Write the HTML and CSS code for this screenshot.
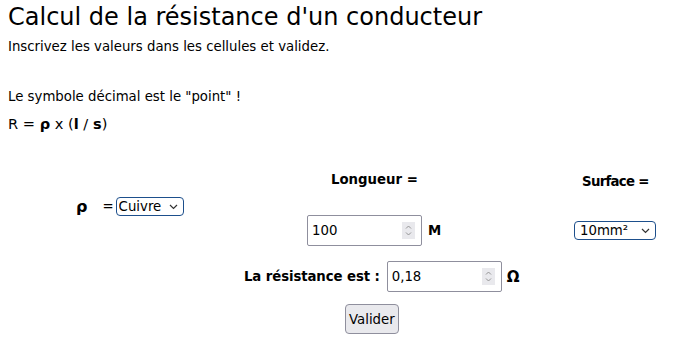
FILE: index.html
```html
<!DOCTYPE html>
<html lang="fr">
<head>
<meta charset="utf-8">
<title>Calcul de la résistance d'un conducteur</title>
<link rel="stylesheet" href="styles.css">
</head>
<body>
<h1 class="title">Calcul de la résistance d'un conducteur</h1>
<p class="intro">Inscrivez les valeurs dans les cellules et validez.</p>
<p class="note">Le symbole décimal est le "point" !</p>
<p class="formula">R = <b>ρ</b> x (<b>l</b> / <b>s</b>)</p>

<div class="calc">
  <div class="cell rho">
    <b class="rho-sym">ρ</b>
    <span class="eq">=</span>
    <span class="sel sel-mat">
      <select class="select"><option>Cuivre</option></select>
      <svg class="chev" width="9" height="6" viewBox="0 0 9 6"><path d="M1 1l3.5 3.5L8 1" fill="none" stroke="#333" stroke-width="1.2"/></svg>
    </span>
  </div>
  <div class="cell lab-long"><b>Longueur =</b></div>
  <div class="cell lab-surf"><b>Surface =</b></div>
  <div class="cell in-long">
    <span class="num num-long">
      <input class="num-input" type="text" value="100">
      <svg class="spin" width="13" height="17" viewBox="0 0 13 17"><rect width="13" height="17" fill="#e9e9ed"/><path d="M4 6.5L6.5 4L9 6.5M4 10.5L6.5 13L9 10.5" fill="none" stroke="#8a8a8a" stroke-width="0.9"/></svg>
    </span>
    <b class="unit">M</b>
  </div>
  <div class="cell in-surf">
    <span class="sel sel-surf">
      <select class="select"><option>10mm²</option></select>
      <svg class="chev" width="9" height="6" viewBox="0 0 9 6"><path d="M1 1l3.5 3.5L8 1" fill="none" stroke="#333" stroke-width="1.2"/></svg>
    </span>
  </div>
</div>

<div class="result">
  <b class="res-label">La résistance est :</b>
  <span class="num num-res">
    <input class="num-input" type="text" value="0,18">
    <svg class="spin" width="13" height="17" viewBox="0 0 13 17"><rect width="13" height="17" fill="#e9e9ed"/><path d="M4 6.5L6.5 4L9 6.5M4 10.5L6.5 13L9 10.5" fill="none" stroke="#8a8a8a" stroke-width="0.9"/></svg>
  </span>
  <b class="unit ohm">Ω</b>
</div>

<div class="actions">
  <button class="btn" type="button">Valider</button>
</div>
</body>
</html>
```
FILE: styles.css
```css
html, body {
  margin: 0;
  padding: 0;
  background: #fff;
}
body {
  padding: 0 8px;
  font-family: "DejaVu Sans", Verdana, sans-serif;
  font-size: 13.3px;
  color: #000;
}
.title {
  font-size: 24px;
  font-weight: normal;
  margin: 3px 0 0;
  line-height: 28px;
}
.intro {
  margin: 8px 0 0;
  line-height: 16px;
}
.note {
  margin: 34px 0 0;
  line-height: 16px;
}
.formula {
  margin: 11px 0 0;
  line-height: 16px;
  font-size: 14.6px;
}
.calc {
  margin-top: 22px;
  display: grid;
  grid-template-columns: 244px 240px 1fr;
  grid-template-rows: 51px 51px;
}
.cell {
  display: flex;
  align-items: center;
}
.rho {
  grid-column: 1;
  grid-row: 1 / span 2;
  padding-left: 68px;
  padding-top: 3px;
}
.rho-sym {
  font-size: 16px;
  margin-right: 15px;
}
.eq {
  margin-right: 2px;
}
.lab-long {
  grid-column: 2;
  grid-row: 1;
  padding-left: 79px;
}
.lab-surf {
  grid-column: 3;
  grid-row: 1;
  padding-left: 90px;
  padding-top: 4px;
  letter-spacing: -0.7px;
}
.in-long {
  grid-column: 2;
  grid-row: 2;
  padding-left: 55px;
}
.in-surf {
  grid-column: 3;
  grid-row: 2;
  padding-left: 82px;
}
.sel {
  position: relative;
  display: inline-block;
}
.select {
  appearance: none;
  -webkit-appearance: none;
  font-family: "DejaVu Sans", Verdana, sans-serif;
  font-size: 13.3px;
  color: #000;
  background: #fff;
  border: 1px solid #1d4f8c;
  border-radius: 4px;
  height: 19px;
  padding: 0 0 0 2px;
  margin: 0;
  line-height: 17px;
}
.sel-mat .select { width: 68px; }
.sel-surf .select { width: 82px; padding-left: 5px; }
.chev {
  position: absolute;
  right: 6px;
  top: 7px;
  pointer-events: none;
}
.num {
  position: relative;
  display: inline-block;
  border: 1px solid #8f8f9d;
  border-radius: 2px;
  box-sizing: border-box;
  background: #fff;
}
.num-long { width: 115px; height: 31px; }
.num-res { width: 115px; height: 31px; }
.num-input {
  border: 0;
  outline: 0;
  padding: 0 0 0 4px;
  margin: 0;
  height: 100%;
  width: 90px;
  font-family: "DejaVu Sans", Verdana, sans-serif;
  font-size: 13.3px;
  color: #000;
  background: transparent;
  box-sizing: border-box;
}
.spin {
  position: absolute;
  right: 6px;
  top: 6px;
}
.unit {
  margin-left: 6px;
  font-size: 13.3px;
}
.result {
  margin-top: 5px;
  display: flex;
  align-items: center;
  padding-left: 236px;
}
.res-label {
  margin-right: 7px;
  letter-spacing: -0.1px;
}
.ohm {
  font-size: 15px;
  margin-left: 5px;
}
.actions {
  margin-top: 12px;
  padding-left: 337px;
}
.btn {
  font-family: "DejaVu Sans", Verdana, sans-serif;
  font-size: 13.3px;
  color: #000;
  background: #e9e9ed;
  border: 1px solid #8f8f9d;
  border-radius: 4px;
  height: 30px;
  padding: 0 3px;
  margin: 0;
}
```
